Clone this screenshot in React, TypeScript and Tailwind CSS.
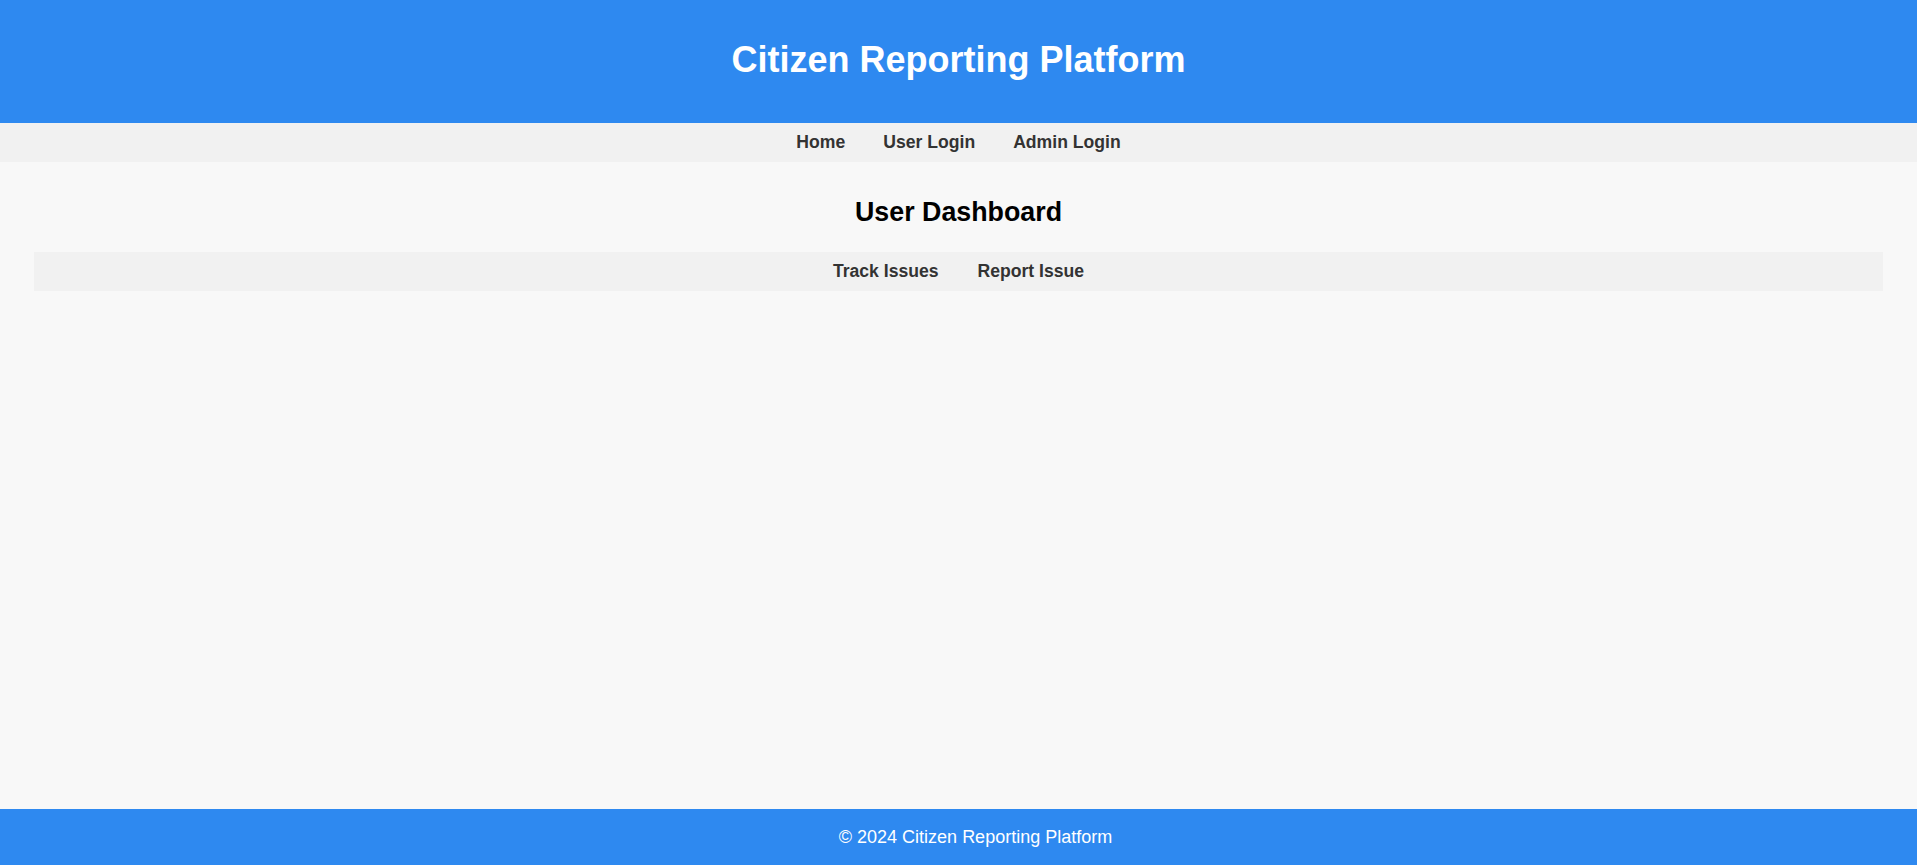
export default function App() {
  const topLinks = ["Home", "User Login", "Admin Login"];
  const tabs = ["Track Issues", "Report Issue"];

  return (
    <div className="min-h-screen flex flex-col bg-[#f8f8f8] font-['Liberation_Sans',Arial,sans-serif]">
      {/* Header */}
      <header className="h-[123px] bg-[#2e89f0] flex items-center justify-center">
        <h1 className="text-[36px] font-bold text-white leading-none -mt-[4px]">
          Citizen Reporting Platform
        </h1>
      </header>

      {/* Top nav */}
      <nav className="h-[39px] bg-[#f1f1f1] flex items-center justify-center gap-[38px]">
        {topLinks.map((link) => (
          <a key={link} href="#" className="text-[17.6px] font-bold text-[#333]">
            {link}
          </a>
        ))}
      </nav>

      {/* Main */}
      <main className="flex-1 px-[34px] pt-[34px]">
        <h2 className="text-center text-[26.8px] font-bold text-black leading-[32px]">
          User Dashboard
        </h2>
        <div className="mt-[24px] h-[39px] bg-[#f1f1f1] flex items-center justify-center gap-[39px]">
          {tabs.map((tab) => (
            <a key={tab} href="#" className="text-[17.6px] font-bold text-[#333]">
              {tab}
            </a>
          ))}
        </div>
      </main>

      {/* Footer */}
      <footer className="h-[56px] bg-[#2e89f0] flex items-center justify-center pl-[34px]">
        <p className="text-[18px] text-white">© 2024 Citizen Reporting Platform</p>
      </footer>
    </div>
  );
}
